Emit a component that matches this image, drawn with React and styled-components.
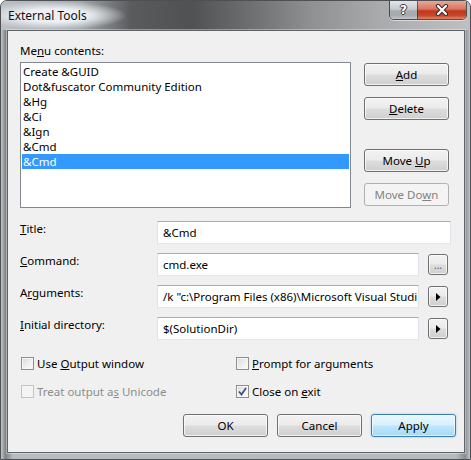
import React from 'react'
import styled, { createGlobalStyle } from 'styled-components'

const GlobalStyle = createGlobalStyle`
  html, body {
    margin: 0;
    padding: 0;
    background: #fff;
  }
  body {
    font-family: "Segoe UI", "Noto Sans", sans-serif;
    font-size: 11.5px;
    color: #000;
  }
`

const menuItems = ['Create &GUID', 'Dot&fuscator Community Edition', '&Hg', '&Ci', '&Ign', '&Cmd', '&Cmd']

const Window = styled.div`
  width: 471px;
  height: 460px;
  box-sizing: border-box;
  display: flex;
  flex-direction: column;
  border: 1px solid #4d5054;
  border-radius: 7px 7px 0 0;
  overflow: hidden;
  background: #b7babd;
`

const TitleBar = styled.header`
  height: 29px;
  flex: 0 0 29px;
  display: flex;
  align-items: flex-start;
  background: linear-gradient(to right, #bcc0c4 0px, #a4a7aa 80px, #5a5b5d 130px, #505153 190px, #6e6f71 250px, #8e9092 310px, #a9abad 380px, #bec0c2 470px);
`

const Caption = styled.div`
  margin: 0 0 0 -20px;
  padding: 7px 40px 6px 27px;
  font-size: 12px;
  line-height: 16px;
  color: #111;
  background: radial-gradient(closest-side, rgba(236, 240, 244, 1) 45%, rgba(236, 240, 244, 0) 100%);
`

const CaptionButtons = styled.div`
  margin-left: auto;
  margin-right: 3px;
  display: flex;
  height: 18px;
  border: 1px solid rgba(40, 40, 40, 0.75);
  border-top: none;
  border-radius: 0 0 5px 5px;
  overflow: hidden;
  box-shadow: 0 1px 0 rgba(255, 255, 255, 0.5);
`

const CaptionButton = styled.div`
  width: ${(p) => p.$w}px;
  display: flex;
  align-items: center;
  justify-content: center;
  background: ${(p) =>
    p.$close
      ? 'linear-gradient(#e9a798 0%, #d8745f 45%, #c0391f 55%, #c8452b 80%, #dd8a6a 100%)'
      : 'linear-gradient(#e3e6e9 0%, #c6cace 45%, #a9aeb3 55%, #a5aaaf 80%, #c3c8cc 100%)'};
  & + & {
    border-left: 1px solid rgba(40, 40, 40, 0.6);
  }
`

const HelpGlyph = styled.span`
  font-family: "DejaVu Sans", sans-serif;
  font-weight: bold;
  font-size: 12px;
  line-height: 12px;
  color: #fff;
  text-shadow: -1px 0 #3a3a3a, 1px 0 #3a3a3a, 0 -1px #3a3a3a, 0 1px #3a3a3a;
`

const Body = styled.div`
  flex: 1;
  display: flex;
  padding: 0 5px 6px 6px;
  background: linear-gradient(90deg, #c4c7ca 0%, #7d8084 1%, #b9bcbf 2.5%, #b7babd 97%, #8a8d90 99%, #c2c5c8 100%);
`

const Client = styled.div`
  flex: 1;
  display: flex;
  flex-direction: column;
  border: 1px solid #5f6266;
  background: #f0f0f0;
  padding: 12px 8px 0 12px;
  box-shadow: 0 0 0 1px rgba(255, 255, 255, 0.35);
`

const U = styled.span`
  text-decoration: underline;
  text-underline-offset: 1px;
`

const Label = styled.div`
  line-height: 15px;
  white-space: nowrap;
`

const ListRow = styled.div`
  display: flex;
  margin-top: 4px;
  align-items: flex-start;
`

const ListBox = styled.div`
  width: 331px;
  height: 146px;
  box-sizing: border-box;
  border: 1px solid #828790;
  background: #fff;
  padding: 1px;
`

const ListItem = styled.div`
  height: 15px;
  line-height: 15px;
  padding-left: 1px;
  white-space: nowrap;
  background: ${(p) => (p.$selected ? '#3399ff' : 'transparent')};
  color: ${(p) => (p.$selected ? '#fff' : '#000')};
`

const SideButtons = styled.div`
  display: flex;
  flex-direction: column;
  gap: 11px;
  margin-left: 13px;
  margin-top: 1px;
`

const Button = styled.button`
  width: ${(p) => p.$w || 85}px;
  height: 23px;
  margin-top: ${(p) => p.$mt || 0}px;
  padding: 0;
  font: inherit;
  line-height: 15px;
  border-radius: 3px;
  border: 1px solid ${(p) => (p.$default ? '#3c7fb1' : p.disabled ? '#adb2b5' : '#707070')};
  color: ${(p) => (p.disabled ? '#838383' : '#000')};
  background: ${(p) =>
    p.$default
      ? 'linear-gradient(#eaf6fd 0%, #d9f0fc 48%, #bee6fd 52%, #a7d9f5 100%)'
      : p.disabled
      ? '#f4f4f4'
      : 'linear-gradient(#f2f2f2 0%, #ebebeb 48%, #dddddd 52%, #cfcfcf 100%)'};
  box-shadow: ${(p) =>
    p.disabled ? 'none' : p.$default ? 'inset 0 0 0 1px rgba(255,255,255,0.6), 0 0 2px rgba(60,160,230,0.6)' : 'inset 0 0 0 1px rgba(255,255,255,0.7)'};
`

const Form = styled.div`
  display: flex;
  flex-direction: column;
  gap: 9px;
  margin-top: 13px;
`

const FieldRow = styled.div`
  display: flex;
  align-items: flex-start;
`

const FieldLabel = styled(Label)`
  width: 137px;
  flex-shrink: 0;
`

const TextBox = styled.div`
  width: ${(p) => p.$w}px;
  height: 23px;
  box-sizing: border-box;
  border: 1px solid #e2e3ea;
  border-top-color: #abadb3;
  border-bottom-color: #e3e9ef;
  background: #fff;
  padding-left: 5px;
  line-height: 21px;
  white-space: nowrap;
  overflow: hidden;
`

const SmallButton = styled.div`
  width: 20px;
  height: 21px;
  box-sizing: border-box;
  margin: 1px 0 0 9px;
  border: 1px solid #707070;
  border-radius: 3px;
  background: linear-gradient(#f2f2f2 0%, #ebebeb 48%, #dddddd 52%, #cfcfcf 100%);
  box-shadow: inset 0 0 0 1px rgba(255, 255, 255, 0.7);
  display: flex;
  align-items: center;
  justify-content: center;
  font-size: 10px;
  color: #555;
`

const Checks = styled.div`
  display: grid;
  grid-template-columns: 215px 1fr;
  row-gap: 13px;
  margin-top: 16px;
  padding-left: 1px;
`

const CheckItem = styled.div`
  display: flex;
  align-items: center;
  gap: 3px;
  height: 15px;
  line-height: 15px;
  white-space: nowrap;
  color: ${(p) => (p.$disabled ? '#8d8d8d' : '#000')};
`

const Box = styled.div`
  width: 13px;
  height: 13px;
  box-sizing: border-box;
  border: 1px solid ${(p) => (p.$disabled ? '#c4c4c4' : '#8e8f8f')};
  background: ${(p) => (p.$disabled ? '#f4f4f4' : 'linear-gradient(135deg, #d6d9dd 0%, #f0f1f2 60%, #fdfdfd 100%)')};
  box-shadow: inset 0 0 0 1px ${(p) => (p.$disabled ? '#f4f4f4' : '#f6f6f6')};
  display: flex;
  align-items: center;
  justify-content: center;
`

const Footer = styled.div`
  display: flex;
  justify-content: flex-end;
  gap: 9px;
  margin-top: 15px;
`

function Check({ children, checked, disabled }) {
  return (
    <CheckItem $disabled={disabled}>
      <Box $disabled={disabled}>
        {checked && (
          <svg width="9" height="9" viewBox="0 0 9 9">
            <path d="M1 4.5 L3.5 7.5 L8 1" fill="none" stroke="#3d4f82" strokeWidth="1.7" />
          </svg>
        )}
      </Box>
      <span>{children}</span>
    </CheckItem>
  )
}

const Arrow = () => (
  <svg width="5" height="8" viewBox="0 0 5 8">
    <polygon points="0,0 4.5,4 0,8" fill="#000" />
  </svg>
)

export default function App() {
  return (
    <>
      <GlobalStyle />
      <Window>
        <TitleBar>
          <Caption>External Tools</Caption>
          <CaptionButtons>
            <CaptionButton $w={27}>
              <HelpGlyph>?</HelpGlyph>
            </CaptionButton>
            <CaptionButton $w={48} $close>
              <svg width="14" height="12" viewBox="0 0 14 12">
                <path d="M3 2 L11 10 M11 2 L3 10" stroke="#3a2a28" strokeWidth="4.2" strokeLinecap="round" />
                <path d="M3 2 L11 10 M11 2 L3 10" stroke="#fff" strokeWidth="2.2" strokeLinecap="round" />
              </svg>
            </CaptionButton>
          </CaptionButtons>
        </TitleBar>
        <Body>
          <Client>
            <Label>
              Me<U>n</U>u contents:
            </Label>
            <ListRow>
              <ListBox>
                {menuItems.map((item, i) => (
                  <ListItem key={i} $selected={i === menuItems.length - 1}>
                    {item}
                  </ListItem>
                ))}
              </ListBox>
              <SideButtons>
                <Button>
                  <U>A</U>dd
                </Button>
                <Button>
                  <U>D</U>elete
                </Button>
                <Button $mt={18}>
                  Move <U>U</U>p
                </Button>
                <Button disabled>
                  Move Do<U>w</U>n
                </Button>
              </SideButtons>
            </ListRow>
            <Form>
              <FieldRow>
                <FieldLabel>
                  <U>T</U>itle:
                </FieldLabel>
                <TextBox $w={294}>&amp;Cmd</TextBox>
              </FieldRow>
              <FieldRow>
                <FieldLabel>
                  <U>C</U>ommand:
                </FieldLabel>
                <TextBox $w={262}>cmd.exe</TextBox>
                <SmallButton>...</SmallButton>
              </FieldRow>
              <FieldRow>
                <FieldLabel>
                  A<U>r</U>guments:
                </FieldLabel>
                <TextBox $w={262}>/k "c:\Program Files (x86)\Microsoft Visual Studi</TextBox>
                <SmallButton>
                  <Arrow />
                </SmallButton>
              </FieldRow>
              <FieldRow>
                <FieldLabel>
                  <U>I</U>nitial directory:
                </FieldLabel>
                <TextBox $w={262}>$(SolutionDir)</TextBox>
                <SmallButton>
                  <Arrow />
                </SmallButton>
              </FieldRow>
            </Form>
            <Checks>
              <Check>
                Use <U>O</U>utput window
              </Check>
              <Check>
                <U>P</U>rompt for arguments
              </Check>
              <Check disabled>
                Treat output a<U>s</U> Unicode
              </Check>
              <Check checked>
                Close on <U>e</U>xit
              </Check>
            </Checks>
            <Footer>
              <Button>OK</Button>
              <Button>Cancel</Button>
              <Button $default>Apply</Button>
            </Footer>
          </Client>
        </Body>
      </Window>
    </>
  )
}
